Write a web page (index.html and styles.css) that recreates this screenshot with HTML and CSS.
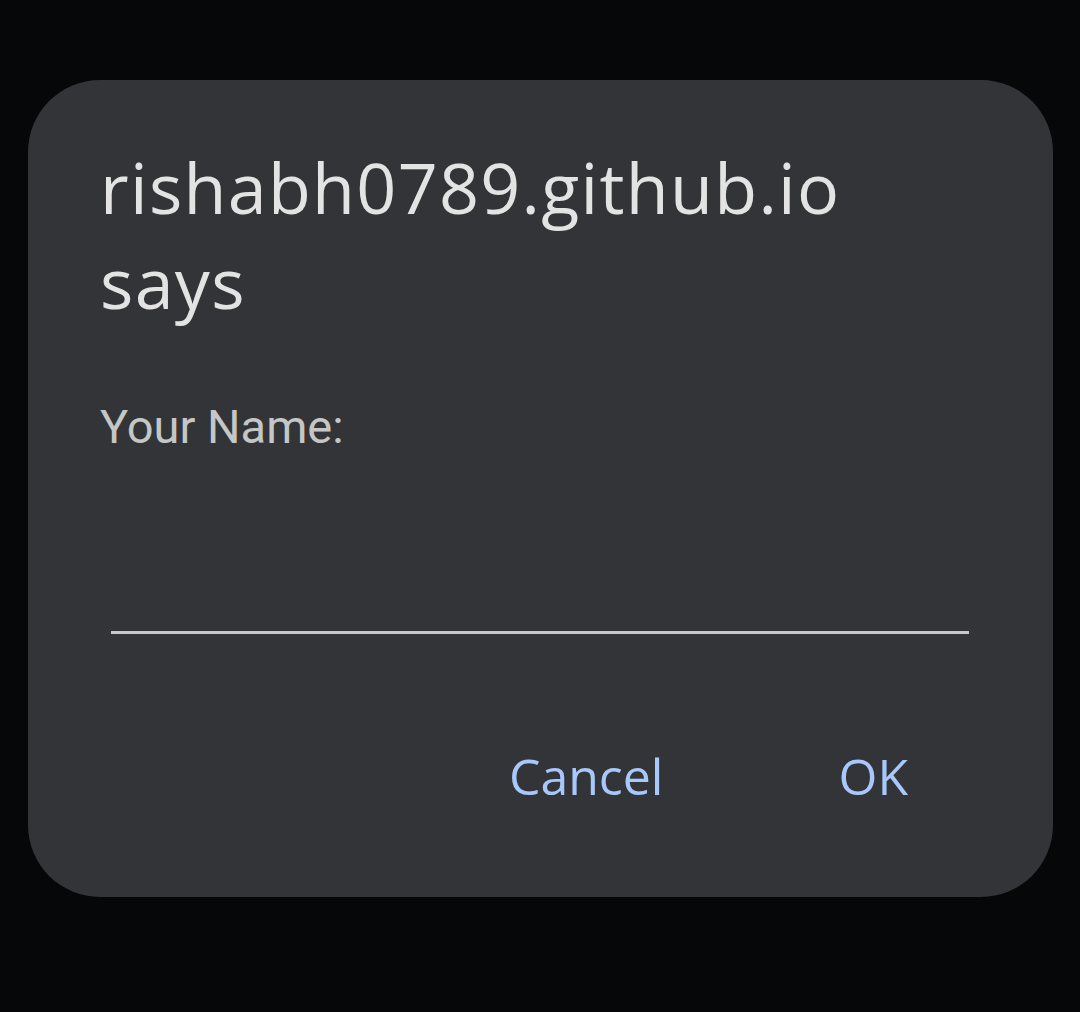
FILE: index.html
```html
<!DOCTYPE html>
<html>
<head>
<meta charset="utf-8">
<link rel="stylesheet" href="styles.css">
</head>
<body>
<div class="screen">
  <div class="dialog">
    <h1 class="title">rishabh0789.github.io says</h1>
    <p class="label">Your Name:</p>
    <div class="field"></div>
    <div class="actions">
      <button class="btn">Cancel</button>
      <button class="btn">OK</button>
    </div>
  </div>
</div>
</body>
</html>
```

FILE: styles.css
```css
html, body {
  margin: 0;
  padding: 0;
  background: #060709;
}
.screen {
  width: 1080px;
  height: 1012px;
  padding: 80px 27px 0 28px;
  box-sizing: border-box;
}
.dialog {
  background: #333438;
  border-radius: 72px;
  height: 817px;
  box-sizing: border-box;
  padding: 0 0 0 72px;
  display: flex;
  flex-direction: column;
}
.title {
  margin: 0;
  padding-top: 60px;
  width: 800px;
  font-family: "Open Sans", sans-serif;
  font-weight: 400;
  font-size: 70px;
  line-height: 95px;
  color: #e3e3e3;
  letter-spacing: 1.3px;
}
.label {
  margin: 0;
  margin-top: 69px;
  font-family: Roboto, sans-serif;
  font-size: 47px;
  line-height: 56px;
  color: #c4c7c5;
}
.field {
  margin-top: 176px;
  margin-left: 11px;
  width: 858px;
  height: 3px;
  background: #c8c8c8;
}
.actions {
  display: flex;
  justify-content: flex-end;
  margin-right: 145px;
  margin-top: 112px;
}
.btn {
  background: none;
  border: none;
  padding: 0;
  font-family: "Open Sans", sans-serif;
  font-size: 50px;
  font-weight: 500;
  color: #a8c7fa;
  line-height: 60px;
}
.btn + .btn {
  margin-left: 175px;
}
```
